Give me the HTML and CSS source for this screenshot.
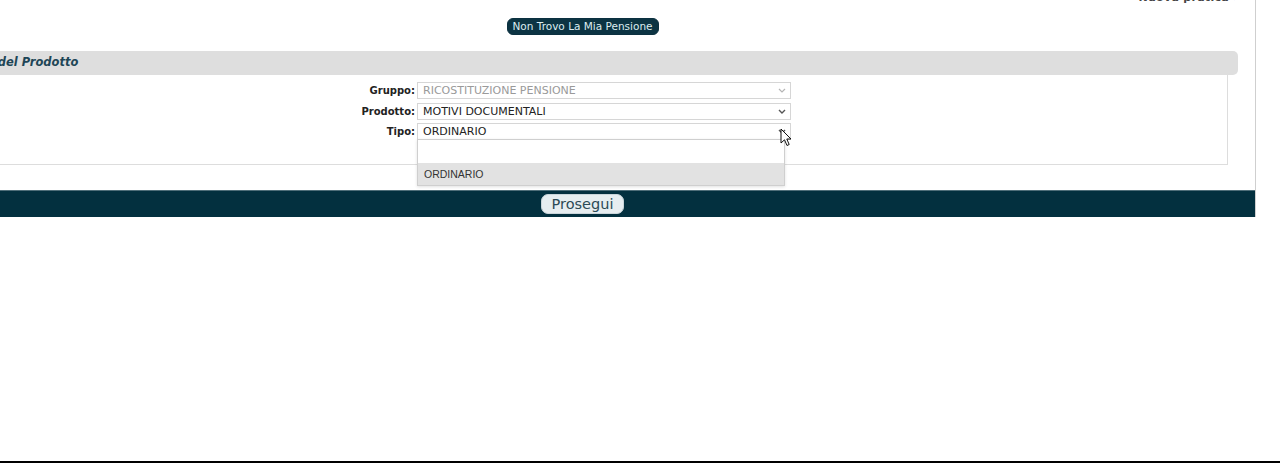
FILE: index.html
```html
<!DOCTYPE html>
<html lang="it">
<head>
<meta charset="utf-8">
<title>Dati del Prodotto</title>
<link rel="stylesheet" href="styles.css">
</head>
<body>
<div class="page">
  <div class="panel">
    <div class="topnote"><span class="topnote-text">Nuova pratica &rsaquo;</span></div>
    <div class="center-row">
      <button class="pill" type="button">Non Trovo La Mia Pensione</button>
    </div>
    <div class="section">
      <div class="section-head">Dati del Prodotto</div>
      <div class="fieldset">
        <div class="form-grid">
          <div class="label">Gruppo:</div>
          <div class="select disabled">
            <span class="select-value">RICOSTITUZIONE PENSIONE</span>
            <svg class="chev" viewBox="0 0 8 5" width="8" height="5"><path d="M1 1 L4 4 L7 1" fill="none" stroke="currentColor" stroke-width="1.2"/></svg>
          </div>
          <div class="label">Prodotto:</div>
          <div class="select">
            <span class="select-value">MOTIVI DOCUMENTALI</span>
            <svg class="chev" viewBox="0 0 8 5" width="8" height="5"><path d="M1 1 L4 4 L7 1" fill="none" stroke="currentColor" stroke-width="1.4"/></svg>
          </div>
          <div class="label">Tipo:</div>
          <div class="select open">
            <span class="select-value">ORDINARIO</span>
            <svg class="chev" viewBox="0 0 8 5" width="8" height="5"><path d="M1 1 L4 4 L7 1" fill="none" stroke="currentColor" stroke-width="1.4"/></svg>
            <div class="dropdown">
              <div class="option empty"></div>
              <div class="option active">ORDINARIO</div>
            </div>
            <svg class="cursor" viewBox="0 0 12 19" width="12" height="19"><path d="M1 1 L1 15 L4.5 11.8 L7 17.5 L9.2 16.5 L6.8 11 L11 11 Z" fill="#fff" stroke="#111" stroke-width="1" stroke-linejoin="round"/></svg>
          </div>
        </div>
      </div>
    </div>
    <div class="footer-bar">
      <button class="btn-go" type="button">Prosegui</button>
    </div>
  </div>
  <div class="bottom-line"></div>
</div>
</body>
</html>
```

FILE: styles.css
```css
* { box-sizing: border-box; }

html, body {
  margin: 0;
  padding: 0;
  height: 100%;
  overflow: hidden;
  background: #ffffff;
  font-family: "DejaVu Sans", Verdana, sans-serif;
}

.page {
  height: 463px;
  display: flex;
  flex-direction: column;
}

.panel {
  margin-left: -90px;
  width: 1346px;
  border-right: 1px solid #cfcfcf;
  display: flex;
  flex-direction: column;
}

.topnote {
  height: 4px;
  overflow: hidden;
  display: flex;
  justify-content: flex-end;
  padding-right: 17px;
}

.topnote-text {
  font-size: 11px;
  line-height: 13px;
  margin-top: -9px;
  color: #444;
  font-weight: bold;
  letter-spacing: 0.3px;
}

.center-row {
  margin-top: 14px;
  display: flex;
  justify-content: center;
}

.pill {
  height: 17px;
  padding: 0 5px;
  border: 1px solid #0c3140;
  border-radius: 6px;
  background: #0c3443;
  color: #dcecf0;
  font-family: "DejaVu Sans", Verdana, sans-serif;
  font-size: 10.5px;
  line-height: 15px;
}

.section {
  margin: 16px 17px 0 17px;
}

.section-head {
  height: 24px;
  background: #dedede;
  border-radius: 0 5px 5px 0;
  padding-left: 40px;
  font-size: 11.5px;
  line-height: 22px;
  font-weight: bold;
  font-style: italic;
  color: #1e4657;
}

.fieldset {
  margin: 0 10px;
  border: 1px solid #dddddd;
  border-top: none;
  padding: 7px 0 24px 0;
}

.form-grid {
  display: grid;
  grid-template-columns: 477px 374px;
  column-gap: 2px;
  row-gap: 3.5px;
  align-items: center;
}

.label {
  text-align: right;
  font-size: 10px;
  font-weight: bold;
  color: #222;
}

.select {
  position: relative;
  height: 17px;
  border: 1px solid #d6d6d6;
  background: #fff;
  display: flex;
  align-items: center;
  padding: 0 4px 0 5px;
  font-size: 11px;
  color: #222;
}

.select.disabled {
  color: #9a9a9a;
}

.select.disabled .chev { color: #b5b5b5; }

.select-value {
  flex: 1;
  white-space: nowrap;
}

.chev {
  color: #555;
  flex: none;
}

.dropdown {
  position: absolute;
  top: 100%;
  left: -1px;
  width: 368px;
  background: #fff;
  border: 1px solid #cfcfcf;
  box-shadow: 0 1px 3px rgba(0,0,0,0.12);
  z-index: 5;
}

.option {
  height: 22px;
  font-family: "Liberation Sans", Arial, sans-serif;
  font-size: 10.5px;
  line-height: 22px;
  padding-left: 6px;
  color: #333;
}

.option.empty { height: 23px; }

.option.active {
  background: #e2e2e2;
}

.cursor {
  position: absolute;
  right: -2px;
  top: 4px;
  z-index: 6;
}

.footer-bar {
  margin-top: 25px;
  height: 27px;
  background: #03303f;
  border-top: 1px solid #4f6e79;
  display: flex;
  justify-content: center;
  align-items: center;
}

.btn-go {
  height: 20px;
  padding: 0 10px;
  border: 1px solid #c9d5da;
  border-radius: 7px;
  background: #e6edf0;
  color: #2c4a56;
  font-family: "DejaVu Sans", Verdana, sans-serif;
  font-size: 14.5px;
  line-height: 18px;
}

.bottom-line {
  margin-top: auto;
  height: 2px;
  background: #000;
}
```
